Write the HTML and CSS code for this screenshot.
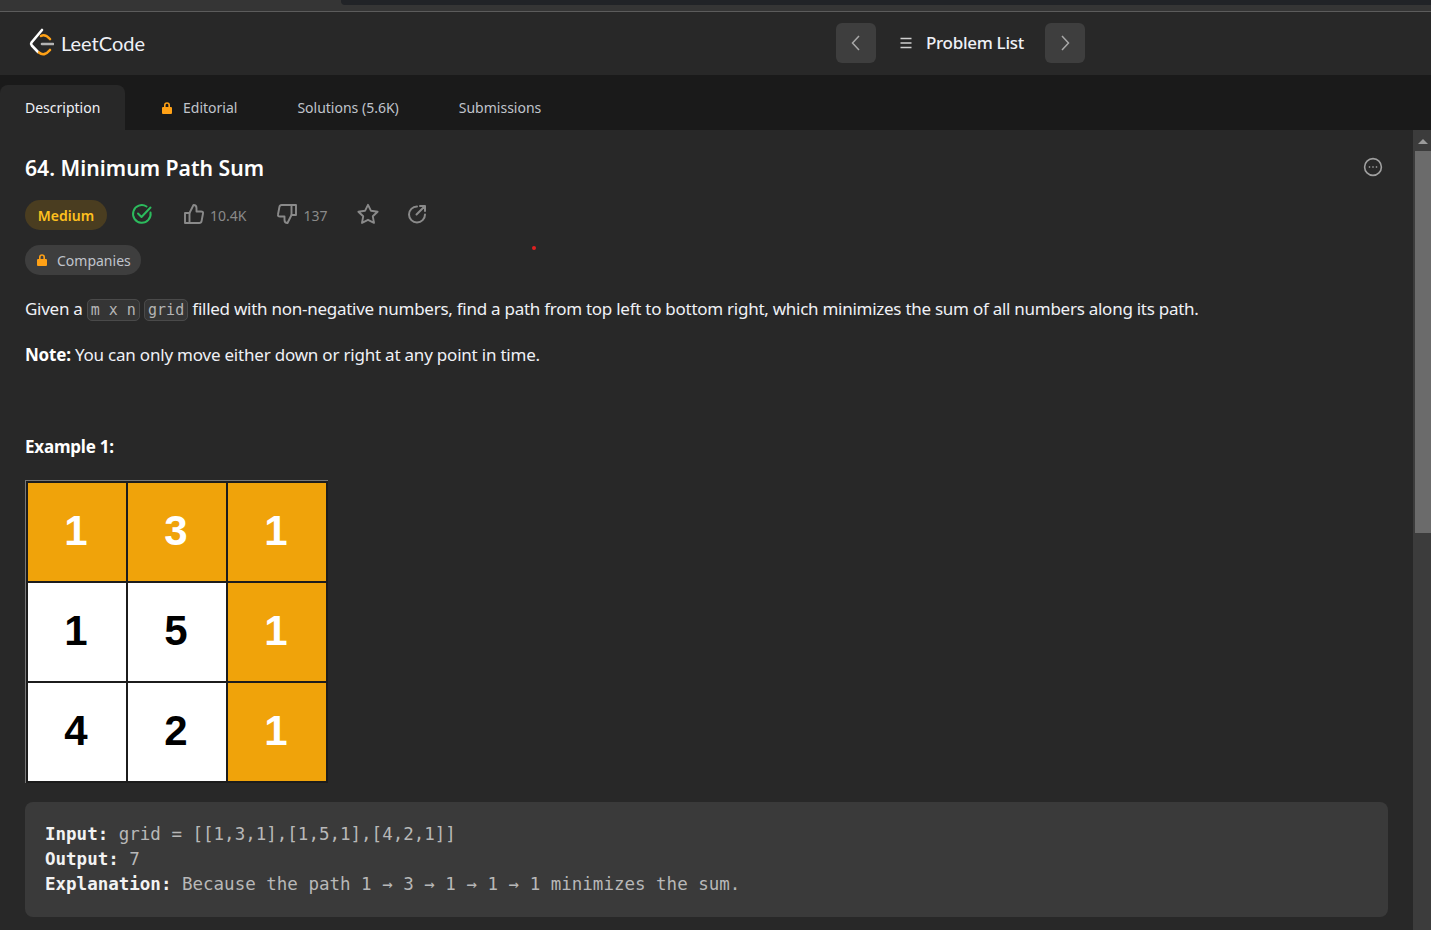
FILE: index.html
```html
<!DOCTYPE html>
<html>

<head>
  <title>64. Minimum Path Sum</title>
  <link rel="stylesheet" href="styles.css">
</head>

<body>
  <div class="browser-strip"><div class="browser-tab"></div></div>

  <nav class="navbar">
    <a class="logo">
      <svg width="26" height="30" viewBox="0 0 26 30" fill="none" stroke-width="2.6" stroke-linecap="round" stroke-linejoin="round">
        <path d="M14 2 L3.5 14.5 Q2.5 16 3.8 17.5 L10 24" stroke="#fff" />
        <path d="M13 8 Q17 5.5 22 11" stroke="#ffa116" />
        <path d="M11 24.5 Q16 29 22 22" stroke="#ffa116" />
        <path d="M14 16 H25" stroke="#b3b3b3" />
      </svg>
      <span>LeetCode</span>
    </a>
    <div class="problem-nav">
      <button class="nav-btn">
        <svg width="14" height="20" viewBox="0 0 14 20" fill="none" stroke="#a8a8a8" stroke-width="1.5"><path d="M10 3 L3.5 10 L10 17" /></svg>
      </button>
      <div class="problem-list">
        <svg width="14" height="14" viewBox="0 0 14 14" stroke="#d0d0d0" stroke-width="1.5"><path d="M1.5 2.5 H12.5 M1.5 7 H12.5 M1.5 11.5 H12.5" /></svg>
        <span>Problem List</span>
      </div>
      <button class="nav-btn">
        <svg width="14" height="20" viewBox="0 0 14 20" fill="none" stroke="#a8a8a8" stroke-width="1.5"><path d="M4 3 L10.5 10 L4 17" /></svg>
      </button>
    </div>
  </nav>

  <div class="tabs">
    <div class="tab active">Description</div>
    <div class="tab">
      <svg class="lock" viewBox="0 0 12 14"><path d="M3 6 V4.2 a3 3 0 0 1 6 0 V6 h1 a1 1 0 0 1 1 1 v5 a1 1 0 0 1-1 1 H2 a1 1 0 0 1-1-1 V7 a1 1 0 0 1 1-1 z M4.6 6 h2.8 V4.2 a1.4 1.4 0 0 0-2.8 0 z" fill="#ffa116" fill-rule="evenodd" /></svg>
      Editorial
    </div>
    <div class="tab plain">Solutions (5.6K)</div>
    <div class="tab plain">Submissions</div>
  </div>

  <div class="panel">
    <main class="content">
      <div class="title-row">
        <h1>64. Minimum Path Sum</h1>
        <svg width="20" height="20" viewBox="0 0 20 20" fill="none" stroke="#a0a0a0" stroke-width="1.6"><circle cx="10" cy="10" r="8.4" /><path d="M5.8 10 h1.4 M9.3 10 h1.4 M12.8 10 h1.4" /></svg>
      </div>

      <div class="meta">
        <span class="pill medium">Medium</span>
        <svg class="solved" width="22" height="22" viewBox="0 0 22 22" fill="none" stroke="#2cbb5d" stroke-width="2" stroke-linecap="round" stroke-linejoin="round"><path d="M19.5 9.5 A8.8 8.8 0 1 1 15.5 3.5" /><path d="M7 10.5 L10.5 14 L19.5 4.5" /></svg>
        <span class="stat like">
          <svg width="22" height="22" viewBox="0 0 22 22" fill="none" stroke="#8a8a8a" stroke-width="1.9" stroke-linejoin="round"><path d="M2 10 H6.5 V20 H2 Z" /><path d="M6.5 10 L10.5 2 Q13.5 2 13.5 5 V8.5 H18 Q20.5 8.5 20 10.5 L18.6 18 Q18.2 20 16.3 20 H6.5" /></svg>
          10.4K
        </span>
        <span class="stat dislike">
          <svg width="22" height="22" viewBox="0 0 22 22" fill="none" stroke="#8a8a8a" stroke-width="1.9" stroke-linejoin="round"><path d="M15.5 12 H20 V2 H15.5 Z" /><path d="M15.5 12 L11.5 20 Q8.5 20 8.5 17 V13.5 H4 Q1.5 13.5 2 11.5 L3.4 4 Q3.8 2 5.7 2 H15.5" /></svg>
          137
        </span>
        <svg class="star" width="22" height="22" viewBox="0 0 22 22" fill="none" stroke="#8a8a8a" stroke-width="1.9" stroke-linejoin="round"><path d="M11 1.8 L14 7.8 L20.6 8.7 L15.8 13.3 L17 19.9 L11 16.8 L5 19.9 L6.2 13.3 L1.4 8.7 L8 7.8 Z" /></svg>
        <svg class="share" width="22" height="22" viewBox="0 0 22 22" fill="none" stroke="#8a8a8a" stroke-width="2" stroke-linecap="round" stroke-linejoin="round"><path d="M11 3.5 A8 8 0 1 0 19 11.5" /><path d="M10.5 11.5 L19 3 M14 3 H19 V8" /></svg>
      </div>

      <span class="pill companies">
        <svg class="lock" viewBox="0 0 12 14"><path d="M3 6 V4.2 a3 3 0 0 1 6 0 V6 h1 a1 1 0 0 1 1 1 v5 a1 1 0 0 1-1 1 H2 a1 1 0 0 1-1-1 V7 a1 1 0 0 1 1-1 z M4.6 6 h2.8 V4.2 a1.4 1.4 0 0 0-2.8 0 z" fill="#ffa116" fill-rule="evenodd" /></svg>
        Companies
      </span>
      <i class="red-dot"></i>

      <p class="first">Given a <code>m x n</code> <code>grid</code> filled with non-negative numbers, find a path from top left to bottom right, which minimizes the sum of all numbers along its path.</p>
      <p class="note"><strong>Note:</strong> You can only move either down or right at any point in time.</p>
      <p class="example"><strong>Example 1:</strong></p>

      <div class="grid">
        <div class="cell hit">1</div>
        <div class="cell hit">3</div>
        <div class="cell hit">1</div>
        <div class="cell">1</div>
        <div class="cell">5</div>
        <div class="cell hit">1</div>
        <div class="cell">4</div>
        <div class="cell">2</div>
        <div class="cell hit">1</div>
      </div>

      <pre><strong>Input:</strong> grid = [[1,3,1],[1,5,1],[4,2,1]]
<strong>Output:</strong> 7
<strong>Explanation:</strong> Because the path 1 → 3 → 1 → 1 → 1 minimizes the sum.</pre>
    </main>

    <div class="scrollbar">
      <div class="scroll-up"></div>
      <div class="scroll-thumb"></div>
    </div>
  </div>
</body>

</html>
```

FILE: styles.css
```css
html,
body {
  margin: 0;
  height: 930px;
  overflow: hidden;
}

body {
  font-family: 'Noto Sans', sans-serif;
  background: #282828;
  color: #eff1f6;
  display: flex;
  flex-direction: column;
}

.browser-strip {
  height: 11px;
  background: #353535;
  border-bottom: 1px solid #5c5c5c;
  padding-left: 341px;
}

.browser-tab {
  height: 5px;
  background: #212327;
  border-bottom-left-radius: 4px;
}

.navbar {
  height: 63px;
  box-sizing: border-box;
  padding: 0 0 2px 28px;
  background: #282828;
  display: flex;
  align-items: center;
}

.logo {
  display: flex;
  align-items: center;
  gap: 7px;
  width: 808px;
  font-family: 'Lato', sans-serif;
  font-size: 20px;
  color: #eff1f6;
}

.problem-nav {
  display: flex;
  align-items: center;
}

.nav-btn {
  width: 40px;
  height: 40px;
  background: #3e3e3e;
  border: none;
  border-radius: 6px;
  padding: 0;
  display: flex;
  align-items: center;
  justify-content: center;
}

.problem-list {
  display: flex;
  align-items: center;
  gap: 13px;
  width: 169px;
  padding-left: 23px;
  box-sizing: border-box;
  font-size: 17px;
  font-weight: 500;
  letter-spacing: -0.3px;
}

.tabs {
  height: 55px;
  box-sizing: border-box;
  padding-top: 10px;
  background: #1a1a1a;
  display: flex;
  font-size: 14px;
  color: #c0c4cc;
}

.tab {
  display: flex;
  align-items: center;
  gap: 10px;
  padding: 0 25px 0 36px;
}

.tab.plain {
  padding-left: 35px;
}

.tab.active {
  width: 125px;
  box-sizing: border-box;
  padding: 0 0 0 25px;
  background: #282828;
  border-radius: 8px 8px 0 0;
  color: #eff1f6;
}

.lock {
  width: 12px;
  height: 14px;
}

.panel {
  flex: 1;
  display: flex;
  min-height: 0;
}

.content {
  flex: 1;
  position: relative;
  padding: 0 25px;
  min-width: 0;
}

.title-row {
  display: flex;
  align-items: center;
  justify-content: space-between;
  padding: 20px 5px 0 0;
  height: 34px;
}

h1 {
  margin: 0;
  font-size: 21.2px;
  font-weight: 600;
  color: #fff;
}

.meta {
  display: flex;
  align-items: center;
  margin-top: 16px;
  height: 30px;
}

.meta svg {
  margin-top: -2px;
}

.pill {
  display: inline-flex;
  align-items: center;
  height: 30px;
  border-radius: 15px;
  font-size: 14px;
  box-sizing: border-box;
}

.medium {
  width: 82px;
  justify-content: center;
  background: #4a3d20;
  color: #ffc01e;
  font-weight: 600;
}

.solved {
  margin-left: 24px;
}

.stat {
  display: flex;
  align-items: center;
  gap: 5px;
  font-size: 14px;
  color: #8a8a8a;
}

.like {
  margin-left: 30px;
}

.dislike {
  margin-left: 30px;
}

.star {
  margin-left: 30px;
}

.share {
  margin-left: 27px;
}

.companies {
  margin-top: 15px;
  padding: 0 10px 0 11px;
  gap: 9px;
  background: #3e3e3e;
  color: #c0c4cc;
}

.red-dot {
  position: absolute;
  left: 532px;
  top: 116px;
  width: 4px;
  height: 4px;
  border-radius: 50%;
  background: #e02020;
}

p {
  margin: 0;
  font-size: 17px;
  line-height: 26px;
  letter-spacing: -0.21px;
}

strong {
  font-weight: 700;
  color: #fff;
}

.first {
  margin-top: 21px;
  letter-spacing: -0.265px;
}

.note {
  margin-top: 19px;
}

.example {
  margin-top: 66px;
}

code {
  font-family: 'DejaVu Sans Mono', monospace;
  font-size: 15px;
  letter-spacing: 0;
  color: #b4b4b4;
  background: #353535;
  border: 1px solid #4a4a4a;
  border-radius: 5px;
  padding: 1px 3px;
}

.grid {
  margin-top: 20px;
  width: 303px;
  box-sizing: border-box;
  padding: 2px;
  display: grid;
  grid-template-columns: repeat(3, 98px);
  grid-auto-rows: 98px;
  gap: 2px;
  background: #1c1c1c;
  border-top: 1px solid #777;
  border-left: 1px solid #777;
}

.cell {
  background: #fff;
  color: #000;
  display: flex;
  align-items: center;
  justify-content: center;
  padding: 0 2px 2px 0;
  font-family: 'Liberation Sans', sans-serif;
  font-size: 42px;
  font-weight: 700;
}

.cell.hit {
  background: #f0a30a;
  color: #fff;
}

pre {
  margin: 19px 0 0;
  height: 115px;
  box-sizing: border-box;
  padding: 20px;
  background: #3a3a3a;
  border-radius: 8px;
  font-family: 'DejaVu Sans Mono', monospace;
  font-size: 17.5px;
  line-height: 25px;
  color: #b8b8b8;
}

pre strong {
  color: #f2f2f2;
}

.scrollbar {
  width: 18px;
  flex: none;
  background: #3c3c3c;
  display: flex;
  flex-direction: column;
  align-items: flex-end;
}

.scroll-up {
  width: 0;
  height: 0;
  margin: 9px 3px 0 0;
  border: 5px solid transparent;
  border-top: 0;
  border-bottom-color: #9a9a9a;
}

.scroll-thumb {
  margin-top: 7px;
  width: 16px;
  height: 382px;
  background: #6b6b6b;
}
```
